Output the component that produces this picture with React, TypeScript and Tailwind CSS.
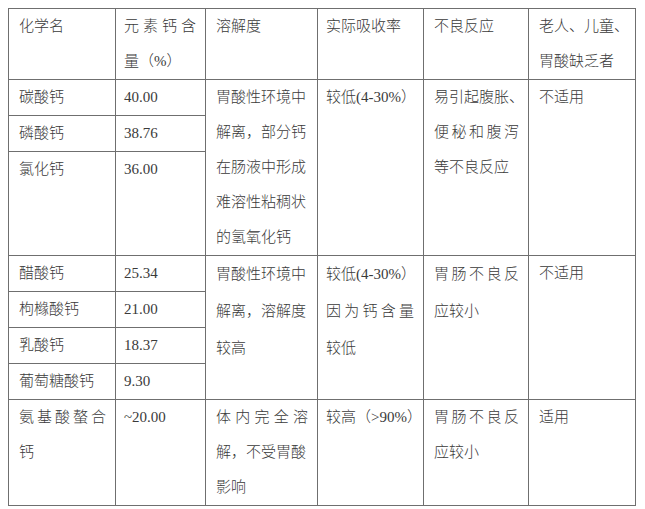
import React from 'react';

type Line = string | { t: string; j: true };
type Cell = { lines: Line[]; rowSpan?: number; lh?: string };

const padByCol = ['pl-[10px]', 'pl-2', 'pl-[10px]', 'pl-2', 'pl-[10px]', 'pl-[10px]'];
const colWidths = ['w-[107px]', 'w-[90px]', 'w-[112px]', 'w-[106px]', 'w-[105px]', 'w-[107px]'];

const J = (t: string): Line => ({ t, j: true });

// each row: height class + cells (columns skipped when covered by a rowspan)
const rows: { h: string; cells: (Cell & { col: number })[] }[] = [
  {
    h: 'h-[71px]',
    cells: [
      { col: 0, lines: ['化学名'] },
      { col: 1, lines: [J('元素钙含'), '量（%）'] },
      { col: 2, lines: ['溶解度'] },
      { col: 3, lines: ['实际吸收率'] },
      { col: 4, lines: ['不良反应'] },
      { col: 5, lines: ['老人、儿童、', '胃酸缺乏者'] },
    ],
  },
  {
    h: 'h-[36px]',
    cells: [
      { col: 0, lines: ['碳酸钙'] },
      { col: 1, lines: ['40.00'] },
      { col: 2, rowSpan: 3, lines: ['胃酸性环境中', '解离，部分钙', '在肠液中形成', '难溶性粘稠状', '的氢氧化钙'] },
      { col: 3, rowSpan: 3, lines: ['较低(4-30%）'] },
      { col: 4, rowSpan: 3, lines: ['易引起腹胀、', J('便秘和腹泻'), '等不良反应'] },
      { col: 5, rowSpan: 3, lines: ['不适用'] },
    ],
  },
  { h: 'h-[35px]', cells: [{ col: 0, lines: ['磷酸钙'] }, { col: 1, lines: ['38.76'] }] },
  { h: 'h-[104px]', cells: [{ col: 0, lines: ['氯化钙'] }, { col: 1, lines: ['36.00'] }] },
  {
    h: 'h-[36px]',
    cells: [
      { col: 0, lines: ['醋酸钙'] },
      { col: 1, lines: ['25.34'] },
      { col: 2, rowSpan: 4, lh: 'h-[37px] leading-[37px]', lines: ['胃酸性环境中', '解离，溶解度', '较高'] },
      { col: 3, rowSpan: 4, lh: 'h-[37px] leading-[37px]', lines: ['较低(4-30%）', J('因为钙含量'), '较低'] },
      { col: 4, rowSpan: 4, lh: 'h-[37px] leading-[37px]', lines: [J('胃肠不良反'), '应较小'] },
      { col: 5, rowSpan: 4, lines: ['不适用'] },
    ],
  },
  { h: 'h-[36px]', cells: [{ col: 0, lines: ['枸橼酸钙'] }, { col: 1, lines: ['21.00'] }] },
  { h: 'h-[36px]', cells: [{ col: 0, lines: ['乳酸钙'] }, { col: 1, lines: ['18.37'] }] },
  { h: 'h-[36px]', cells: [{ col: 0, lines: ['葡萄糖酸钙'] }, { col: 1, lines: ['9.30'] }] },
  {
    h: 'h-[103px]',
    cells: [
      { col: 0, lines: [J('氨基酸螯合'), '钙'] },
      { col: 1, lines: ['~20.00'] },
      { col: 2, lines: [J('体内完全溶'), '解，不受胃酸', '影响'] },
      { col: 3, lines: ['较高（>90%）'] },
      { col: 4, lines: [J('胃肠不良反'), '应较小'] },
      { col: 5, lines: ['适用'] },
    ],
  },
];

const TextLine: React.FC<{ line: Line; lh: string }> = ({ line, lh }) =>
  typeof line === 'string' ? (
    <div className={`${lh} whitespace-nowrap`}>{line}</div>
  ) : (
    <div className={`${lh} whitespace-nowrap text-justify [text-align-last:justify]`}>{line.t}</div>
  );

export default function App() {
  return (
    <div className="min-h-[509px] w-[645px] bg-white pl-2 pt-2">
      <table
        className="w-[627px] table-fixed border-collapse text-[15px] font-light text-[#3a3a3a]"
        style={{ fontFamily: '"Liberation Serif", "Noto Sans CJK SC", serif' }}
      >
        <colgroup>
          {colWidths.map((w, i) => (
            <col key={i} className={w} />
          ))}
        </colgroup>
        <tbody>
          {rows.map((r, ri) => (
            <tr key={ri} className={r.h}>
              {r.cells.map((c) => (
                <td
                  key={c.col}
                  rowSpan={c.rowSpan}
                  className={`overflow-visible border border-[#6f6f6f] p-0 pr-[9px] align-top ${padByCol[c.col]}`}
                >
                  {c.lines.map((l, li) => (
                    <TextLine key={li} line={l} lh={c.lh ?? 'h-[35px] leading-[35px]'} />
                  ))}
                </td>
              ))}
            </tr>
          ))}
        </tbody>
      </table>
    </div>
  );
}
